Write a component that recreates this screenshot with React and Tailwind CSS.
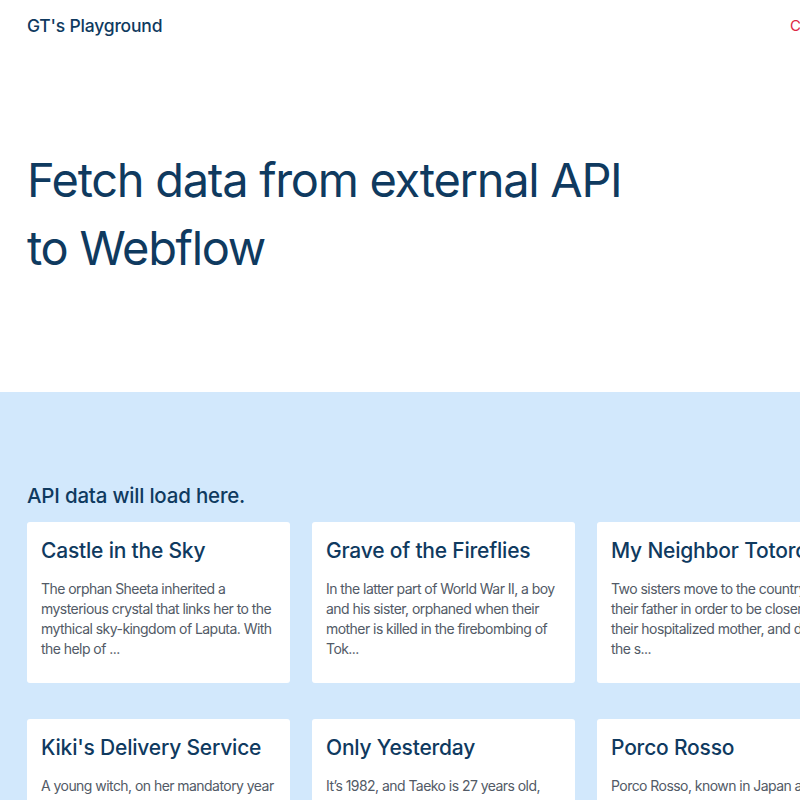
const films = [
  {
    title: 'Castle in the Sky',
    text: 'The orphan Sheeta inherited a mysterious crystal that links her to the mythical sky-kingdom of Laputa. With the help of ...',
  },
  {
    title: 'Grave of the Fireflies',
    text: 'In the latter part of World War II, a boy and his sister, orphaned when their mother is killed in the firebombing of Tok...',
  },
  {
    title: 'My Neighbor Totoro',
    text: 'Two sisters move to the country with their father in order to be closer to their hospitalized mother, and discover the s...',
  },
  {
    title: "Kiki's Delivery Service",
    text: 'A young witch, on her mandatory year of independent life, finds fitting into a new community difficult while she...',
  },
  {
    title: 'Only Yesterday',
    text: 'It’s 1982, and Taeko is 27 years old, unmarried, and has lived her whole life in Tokyo. She decides to...',
  },
  {
    title: 'Porco Rosso',
    text: 'Porco Rosso, known in Japan as Crimson Pig (Kurenai no Buta) is the sixth animated film by Hayao Miyazaki...',
  },
];

export default function App() {
  return (
    <div className="w-[800px] h-[800px] overflow-hidden bg-white font-['Inter',sans-serif] text-[#0f3a5f]">
      <div className="w-[880px]">
        {/* Nav */}
        <nav className="h-[52px] px-[27px] flex items-center justify-between">
          <span className="text-[17.5px] font-medium tracking-[-0.2px]">GT's Playground</span>
          <span className="text-[15px] text-[#dc2645] w-[63px]">Contact</span>
        </nav>

        {/* Hero */}
        <section className="pt-[94px] pb-[110px] px-[27px]">
          <h1 className="text-[47px] leading-[68px] font-normal tracking-[-1.3px]">
            Fetch data from external API
            <br />
            to Webflow
          </h1>
        </section>

        {/* Data */}
        <section className="bg-[#d2e8fc] px-[27px] pt-[90px] pb-[40px]">
          <h2 className="text-[20.5px] leading-[28px] font-medium mb-[12px] tracking-[-0.2px]">API data will load here.</h2>
          <div className="grid grid-cols-[repeat(3,263px)] gap-x-[22px] gap-y-[36px]">
            {films.map((f) => (
              <div key={f.title} className="bg-white rounded-[3px] h-[161px] px-[14px] pt-[15px]">
                <h3 className="text-[21px] leading-[28px] font-medium tracking-[-0.2px]">{f.title}</h3>
                <p className="mt-[14px] text-[14px] leading-[20px] text-[#525a66] tracking-[-0.55px]">{f.text}</p>
              </div>
            ))}
          </div>
        </section>
      </div>
    </div>
  );
}
